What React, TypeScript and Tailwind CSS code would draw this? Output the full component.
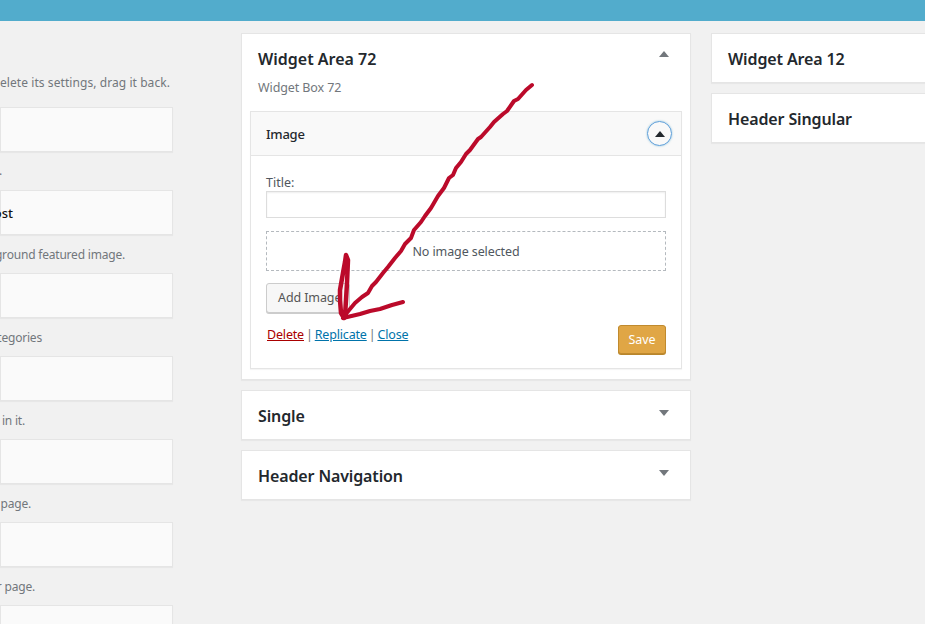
const fontClass = "font-['Noto_Sans','Open_Sans',sans-serif]";

function Triangle({ up, className }: { up: boolean; className: string }) {
  return (
    <svg width="10" height="6" viewBox="0 0 10 6" className={className}>
      <path d={up ? "M5 0L10 6H0Z" : "M5 6L10 0H0Z"} fill="currentColor" />
    </svg>
  );
}

function AvailableCard({ label }: { label?: string }) {
  return (
    <div className="h-[45px] shrink-0 bg-[#fafafa] border border-[#e5e5e5] shadow-[0_1px_1px_rgba(0,0,0,0.04)] flex items-center justify-end pt-[2px] pr-[159px] text-[13px] font-medium text-[#111111] whitespace-nowrap">
      {label}
    </div>
  );
}

function Description({ text, extra }: { text: string; extra: string }) {
  return (
    <div className={`h-[38px] flex items-center justify-end whitespace-nowrap text-[12px] text-[#72777c] ${extra}`}>
      {text}
    </div>
  );
}

function Sidebar({ title, open, mt }: { title: string; open?: boolean; mt?: string }) {
  return (
    <div className={`h-[50px] bg-white border border-[#e5e5e5] shadow-[0_1px_1px_rgba(0,0,0,0.04)] flex items-center justify-between pl-4 pr-[21px] pt-[2px] ${mt ?? ""}`}>
      <span className="text-[16px] leading-none font-semibold tracking-[-0.13px] text-[#23282d]">{title}</span>
      {open === false && <Triangle up={false} className="text-[#72777c] -mt-[6px]" />}
    </div>
  );
}

export default function App() {
  return (
    <div className={`relative w-[925px] h-[624px] overflow-hidden bg-[#f1f1f1] ${fontClass}`}>
      <div className="h-[21px] bg-[#52accc]" />
      <div className="flex items-start">
        <div className="w-[173px] shrink-0 pt-[43px] flex flex-col">
          <Description text="elete its settings, drag it back." extra="pr-[3px] mb-[5px] tracking-[0.07px]" />
          <AvailableCard />
          <Description text="." extra="pr-[171px] tracking-[-0.2px]" />
          <AvailableCard label="ost" />
          <Description text="ground featured image." extra="pr-[48px] pt-[2px] tracking-[-0.2px]" />
          <AvailableCard />
          <Description text="tegories" extra="pr-[131px] pt-[2px] tracking-[-0.2px]" />
          <AvailableCard />
          <Description text="in it." extra="pr-[148px] pt-[2px] tracking-[-0.2px]" />
          <AvailableCard />
          <Description text="page." extra="pr-[142px] pt-[2px] tracking-[-0.2px]" />
          <AvailableCard />
          <Description text="r page." extra="pr-[138px] pt-[2px] tracking-[-0.2px]" />
          <AvailableCard />
        </div>

        <div className="w-[450px] ml-[68px] shrink-0 pt-[12px] flex flex-col">
          <div className="h-[347px] bg-white border border-[#e5e5e5] shadow-[0_1px_1px_rgba(0,0,0,0.04)] px-2 flex flex-col">
            <div className="flex justify-between pl-2 pr-[13px] h-[77px] shrink-0">
              <div>
                <div className="mt-[16px] text-[16px] leading-[18px] font-semibold tracking-[0px] text-[#23282d]">Widget Area 72</div>
                <div className="mt-[11px] text-[12.5px] leading-[18px] tracking-[-0.1px] text-[#72777c]">Widget Box 72</div>
              </div>
              <Triangle up className="text-[#72777c] mt-[17px]" />
            </div>
            <div className="h-[258px] border border-[#e5e5e5] shadow-[0_1px_1px_rgba(0,0,0,0.04)] flex flex-col">
              <div className="h-[44px] shrink-0 bg-[#f9f9f9] border-b border-[#e5e5e5] flex items-center justify-between pl-[15px] pr-[9px]">
                <span className="pt-[2px] text-[13px] font-medium tracking-[-0.25px] text-[#23282d]">Image</span>
                <span className="w-[25px] h-[25px] rounded-full border-[1.5px] border-[#5b9dd9] shadow-[0_0_2px_rgba(30,140,190,0.5)] flex items-center justify-center">
                  <Triangle up className="text-[#23282d]" />
                </span>
              </div>
              <div className="flex-1 px-[15px] flex flex-col">
                <label className="mt-[18px] text-[12.5px] leading-[17px] text-[#50575e]">Title:</label>
                <div className="h-[27px] bg-white border border-[#dddddd] shadow-[inset_0_1px_2px_rgba(0,0,0,0.07)]" />
                <div className="h-[40px] mt-[13px] pt-[2px] border border-dashed border-[#b4b9be] flex items-center justify-center text-[12.5px] tracking-[-0.1px] text-[#50575e]">
                  No image selected
                </div>
                <button className="mt-[12px] w-[84px] h-[30px] bg-[#f7f7f7] border border-[#cccccc] rounded-[3px] shadow-[0_1px_0_#cccccc] pl-[11px] text-left text-[12.5px] tracking-[-0.1px] text-[#555555]">
                  Add Image
                </button>
                <div className="flex justify-between items-start">
                  <div className="mt-[12px] ml-[1px] text-[12.5px] leading-[20px] tracking-[-0.17px] text-[#72777c]">
                    <a className="text-[#a00] underline">Delete</a>
                    <span className="mx-[2px]">|</span>
                    <a className="text-[#0073aa] underline">Replicate</a>
                    <span className="mx-[2px]">|</span>
                    <a className="text-[#0073aa] underline">Close</a>
                  </div>
                  <button className="mt-[12px] pt-[2px] w-[48px] h-[29px] bg-[#e0a645] border border-[#c08a2e] rounded-[3px] shadow-[0_1px_0_#b8862c] text-[12.5px] tracking-[-0.1px] text-white">
                    Save
                  </button>
                </div>
              </div>
            </div>
          </div>
          <Sidebar title="Single" open={false} mt="mt-[10px]" />
          <Sidebar title="Header Navigation" open={false} mt="mt-[10px]" />
        </div>

        <div className="w-[450px] ml-[20px] shrink-0 pt-[12px] flex flex-col">
          <Sidebar title="Widget Area 12" />
          <Sidebar title="Header Singular" mt="mt-[10px]" />
        </div>
      </div>

      <svg className="absolute left-0 top-0 pointer-events-none" width="925" height="624" viewBox="0 0 925 624" fill="none">
        <path
          d="M532 85L526 90L518 99L514 101L507 111L503 114L494 122L490 127L481 137L478 139L470 150L466 154L461 162L456 168L453 175L449 178L444 188L438 196L431 208L425 216L421 222L414 230L411 238L405 244L401 251L395 258L388 267L383 273L376 282L372 286L368 293L362 297L355 303L350 309L345 315L343 318L360 314L370 311L380 309L392 305L403 302"
          stroke="#bb0a2a"
          strokeWidth="4"
          strokeLinejoin="round"
          strokeLinecap="round"
        />
        <path
          d="M344 318L341 313L340 300L340 290L343 273L345 262L346 255L348 260L347 283L346 300L345 316"
          stroke="#bb0a2a"
          strokeWidth="4.5"
          strokeLinejoin="round"
          strokeLinecap="round"
        />
      </svg>
    </div>
  );
}
